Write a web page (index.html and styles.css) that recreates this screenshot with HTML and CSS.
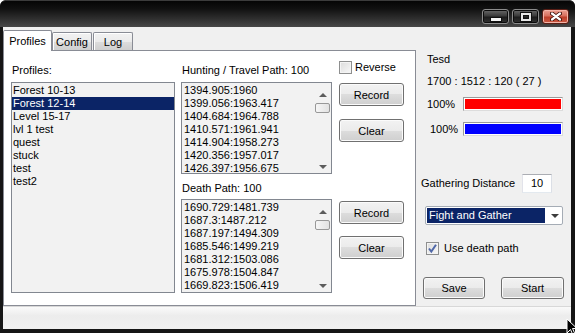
FILE: index.html
```html
<!DOCTYPE html>
<html lang="en">
<head>
  <meta charset="UTF-8">
  <title>Bot</title>
  <link rel="stylesheet" href="styles.css">
</head>
<body>
  <div class="window">
    <div class="titlebar">
      <span class="cap-btn"><span class="glyph-min"></span></span>
      <span class="cap-btn"><span class="glyph-max"></span></span>
      <span class="cap-btn close">
        <svg width="12" height="9" viewBox="0 0 12 9">
          <path d="M2 1.5 L10 7.5 M10 1.5 L2 7.5" stroke="#3a0d06" stroke-width="4" stroke-linecap="round"/>
          <path d="M2 1.5 L10 7.5 M10 1.5 L2 7.5" stroke="#fff" stroke-width="2.2" stroke-linecap="round"/>
        </svg>
      </span>
    </div>

    <div class="client">
      <div class="main">
        <div class="tabs">
          <div class="tab-strip">
            <div class="tab active">Profiles</div>
            <div class="tab">Config</div>
            <div class="tab log">Log</div>
          </div>

          <div class="tab-page">
            <div class="col profiles">
              <div class="label">Profiles:</div>
              <div class="listbox profile-list">
                <div class="item">Forest 10-13</div>
                <div class="item selected">Forest 12-14</div>
                <div class="item">Level 15-17</div>
                <div class="item">lvl 1 test</div>
                <div class="item">quest</div>
                <div class="item">stuck</div>
                <div class="item">test</div>
                <div class="item">test2</div>
              </div>
            </div>

            <div class="col paths">
              <div class="label">Hunting / Travel Path: 100</div>
              <div class="listbox path-list hunt">
                <div class="items">
                  <div class="item">1394.905:1960</div>
                  <div class="item">1399.056:1963.417</div>
                  <div class="item">1404.684:1964.788</div>
                  <div class="item">1410.571:1961.941</div>
                  <div class="item">1414.904:1958.273</div>
                  <div class="item">1420.356:1957.017</div>
                  <div class="item">1426.397:1956.675</div>
                </div>
                <div class="vscroll">
                  <span class="arrow up"></span>
                  <span class="thumb"></span>
                  <span class="arrow down"></span>
                </div>
              </div>

              <div class="label death-label">Death Path: 100</div>
              <div class="listbox path-list death">
                <div class="items">
                  <div class="item">1690.729:1481.739</div>
                  <div class="item">1687.3:1487.212</div>
                  <div class="item">1687.197:1494.309</div>
                  <div class="item">1685.546:1499.219</div>
                  <div class="item">1681.312:1503.086</div>
                  <div class="item">1675.978:1504.847</div>
                  <div class="item">1669.823:1506.419</div>
                </div>
                <div class="vscroll">
                  <span class="arrow up"></span>
                  <span class="thumb"></span>
                  <span class="arrow down"></span>
                </div>
              </div>
            </div>

            <div class="col actions">
              <div class="check reverse"><span class="box"></span>Reverse</div>
              <button class="btn rec-hunt">Record</button>
              <button class="btn clear-hunt">Clear</button>
              <button class="btn rec-death">Record</button>
              <button class="btn clear-death">Clear</button>
            </div>
          </div>
        </div>

        <div class="side">
          <div class="name">Tesd</div>
          <div class="coords">1700 : 1512 : 120 ( 27 )</div>
          <div class="bar-row hp">
            <span class="pct">100%</span>
            <div class="bar"><div class="fill red"></div></div>
          </div>
          <div class="bar-row mp">
            <span class="pct">100%</span>
            <div class="bar"><div class="fill blue"></div></div>
          </div>
          <div class="gather">
            <span>Gathering Distance</span>
            <div class="textbox">10</div>
          </div>
          <div class="combo">
            <span class="combo-text">Fight and Gather</span>
            <span class="combo-arrow"></span>
          </div>
          <div class="check death-check">
            <span class="box checked">
              <svg width="11" height="11" viewBox="0 0 11 11">
                <path d="M2 5.5 L4.3 8.5 L9 1.8" fill="none" stroke="#5068a8" stroke-width="2"/>
              </svg>
            </span>
            Use death path
          </div>
          <div class="bottom-buttons">
            <button class="btn save">Save</button>
            <button class="btn start">Start</button>
          </div>
        </div>
      </div>
      <div class="status"></div>
    </div>

    <!-- mouse pointer left on the grip -->
    <svg class="cursor" width="12" height="18" viewBox="0 0 12 18">
      <path d="M1 1 L1 15 L4.5 11.5 L7 17 L9 16 L6.5 10.5 L11 10.5 Z" fill="#000" stroke="#fff" stroke-width="1"/>
    </svg>
  </div>
</body>
</html>
```

FILE: styles.css
```css
body {
  margin: 0;
  font-family: "Liberation Sans", Arial, sans-serif;
  font-size: 11px;
  color: #000;
  background: #fff;
}

.window {
  position: relative;
  width: 575px;
  height: 333px;
  box-sizing: border-box;
  background: #151515;
  border-radius: 6px 6px 0 0;
  display: flex;
  flex-direction: column;
  overflow: hidden;
}

.titlebar {
  height: 27px;
  box-sizing: border-box;
  padding: 8px 6px 0 0;
  display: flex;
  justify-content: flex-end;
  align-items: flex-start;
  background: linear-gradient(#050505 0%, #111 30%, #474747 100%);
  border-top: 1px solid #3c3c3c;
  border-radius: 6px 6px 0 0;
}

.cap-btn {
  width: 27px;
  height: 15px;
  box-sizing: border-box;
  margin-left: 3px;
  border: 1px solid #8c8c8c;
  border-radius: 3px;
  background: linear-gradient(#6a6a6a 0%, #3a3a3a 45%, #1c1c1c 55%, #333 100%);
  box-shadow: inset 0 0 0 1px #0c0c0c;
  display: flex;
  align-items: center;
  justify-content: center;
}

.cap-btn.close {
  border-color: #5a1e15;
  background: linear-gradient(#eba092 0%, #d7705e 45%, #bd3f2a 55%, #cc5a44 100%);
  box-shadow: inset 0 0 0 1px #f3b4a8;
}

.glyph-min {
  width: 10px;
  height: 3px;
  margin-top: 5px;
  background: #f4f4f4;
  box-shadow: 0 0 0 1px #111;
}

.glyph-max {
  width: 6px;
  height: 4px;
  border: 2px solid #e6e6e6;
  border-top-width: 2px;
  box-shadow: 0 0 0 1px #111, inset 0 0 0 1px #111;
}

.client {
  flex: 1;
  margin: 0 4px 4px 3px;
  background: #f0f0f0;
  display: flex;
  flex-direction: column;
}

.main {
  height: 279px;
  display: flex;
}

.tabs {
  width: 413px;
  display: flex;
  flex-direction: column;
}

.tab-strip {
  height: 23px;
  display: flex;
  align-items: flex-end;
}

.tab {
  width: 40px;
  height: 18px;
  box-sizing: border-box;
  border: 1px solid #898c95;
  border-bottom: none;
  border-radius: 2px 2px 0 0;
  background: linear-gradient(#f2f2f2 0%, #ebebeb 50%, #dddddd 50%, #cfcfcf 100%);
  box-shadow: inset 0 1px 0 #fff, inset 1px 0 0 #fff;
  text-align: center;
  line-height: 18px;
}

.tab.active {
  position: relative;
  z-index: 1;
  width: 49px;
  height: 21px;
  margin-bottom: -1px;
  background: #fff;
  box-shadow: none;
  line-height: 20px;
}

.tab.log {
  margin-left: 1px;
}

.tab-page {
  flex: 1;
  border: 1px solid #898c95;
  background: #fff;
  display: flex;
  padding-left: 7px;
}

.col {
  display: flex;
  flex-direction: column;
}

.label {
  margin-top: 13px;
  line-height: 13px;
  padding-left: 1px;
}

.profiles {
  width: 164px;
}

.paths {
  width: 151px;
  margin-left: 6px;
}

.actions {
  width: 65px;
  margin-left: 7px;
}

.listbox {
  box-sizing: border-box;
  border: 1px solid #828790;
  background: #f2f2f2;
  overflow: hidden;
  margin-top: 5px;
}

.item {
  line-height: 13px;
  height: 13px;
  white-space: nowrap;
}

.profile-list {
  height: 211px;
  padding-top: 1px;
}

.profile-list .item {
  padding-left: 1px;
}

.profile-list .item.selected {
  background: #0b2466;
  color: #fff;
}

.path-list {
  display: flex;
}

.path-list .items {
  flex: 1;
  padding: 1px 0 0 2px;
}

.hunt {
  height: 92px;
}

.death-label {
  margin-top: 8px;
}

.death {
  height: 94px;
  margin-top: 4px;
}

.vscroll {
  width: 17px;
  display: flex;
  flex-direction: column;
  align-items: center;
  padding: 10px 0 4px;
  box-sizing: border-box;
}

.arrow {
  width: 0;
  height: 0;
  border-left: 4px solid transparent;
  border-right: 4px solid transparent;
}

.arrow.up {
  border-bottom: 4px solid #5c5c5c;
}

.arrow.down {
  margin-top: auto;
  border-top: 4px solid #5c5c5c;
}

.thumb {
  width: 15px;
  height: 10px;
  box-sizing: border-box;
  margin-top: 6px;
  border: 1px solid #989898;
  border-radius: 2px;
  background: linear-gradient(90deg, #f6f6f6, #e2e2e2);
}

.check {
  display: flex;
  align-items: center;
  line-height: 13px;
}

.box {
  width: 13px;
  height: 13px;
  box-sizing: border-box;
  border: 1px solid #8e8f8f;
  background: linear-gradient(135deg, #dcdcdc, #f8f8f8);
  box-shadow: inset 0 0 0 1px #f4f4f4;
  margin-right: 3px;
  display: flex;
  align-items: center;
  justify-content: center;
}

.reverse {
  margin-top: 10px;
}

.btn {
  box-sizing: border-box;
  height: 23px;
  width: 65px;
  padding: 0;
  font-family: inherit;
  font-size: 11px;
  color: #000;
  border: 1px solid #707070;
  border-radius: 3px;
  background: linear-gradient(#f2f2f2 0%, #ebebeb 50%, #dddddd 50%, #cfcfcf 100%);
  box-shadow: inset 0 0 0 1px #fbfbfb;
}

.rec-hunt { margin-top: 9px; }
.clear-hunt { margin-top: 13px; }
.rec-death { margin-top: 59px; }
.clear-death { margin-top: 12px; }

.side {
  width: 155px;
  display: flex;
  flex-direction: column;
  line-height: 13px;
}

.name {
  margin: 26px 0 0 11px;
}

.coords {
  margin: 9px 0 0 11px;
}

.bar-row {
  display: flex;
  align-items: center;
  height: 14px;
}

.bar-row.hp {
  margin-top: 9px;
  padding-left: 11px;
}

.bar-row.mp {
  margin-top: 11px;
  padding-left: 14px;
}

.pct {
  width: 36px;
}

.mp .pct {
  width: 33px;
}

.bar {
  width: 100px;
  height: 14px;
  box-sizing: border-box;
  border: 1px solid #9a9a9a;
  border-right-color: #dcdcdc;
  border-bottom-color: #dcdcdc;
  padding: 1px;
  background: #fff;
}

.fill {
  height: 100%;
}

.fill.red { background: #ff0000; }
.fill.blue { background: #0000ff; }

.gather {
  margin-top: 38px;
  height: 19px;
  display: flex;
  align-items: center;
  padding-left: 5px;
}

.textbox {
  width: 30px;
  height: 19px;
  box-sizing: border-box;
  margin: 0 19px 0 auto;
  border: 1px solid #abadb3;
  border-left-color: #e2e3ea;
  border-bottom-color: #e3e9ef;
  border-right-color: #dbdfe6;
  background: #fff;
  text-align: center;
  line-height: 17px;
}

.combo {
  margin: 13px 0 0 9px;
  width: 138px;
  height: 19px;
  box-sizing: border-box;
  border: 1px solid #a5acb5;
  border-radius: 2px;
  background: #fff;
  padding: 1px;
  display: flex;
  align-items: stretch;
}

.combo-text {
  width: 118px;
  background: #0b2466;
  color: #fff;
  line-height: 15px;
  padding-left: 2px;
  box-sizing: border-box;
}

.combo-arrow {
  width: 0;
  height: 0;
  margin: 6px 0 0 6px;
  border-left: 4px solid transparent;
  border-right: 4px solid transparent;
  border-top: 4px solid #3c3c3c;
}

.death-check {
  margin: 17px 0 0 10px;
}

.box.checked {
  margin-right: 5px;
}

.bottom-buttons {
  display: flex;
  margin-top: 22px;
  padding-left: 7px;
}

.btn.save {
  width: 62px;
  height: 22px;
}

.btn.start {
  width: 63px;
  height: 22px;
  margin-left: 16px;
}

.status {
  flex: 1;
  border-top: 1px solid #d8d8d8;
  background: linear-gradient(#fafafa, #ececec 40%, #f0f0f0);
}

.cursor {
  position: absolute;
  left: 566px;
  top: 318px;
}
```
